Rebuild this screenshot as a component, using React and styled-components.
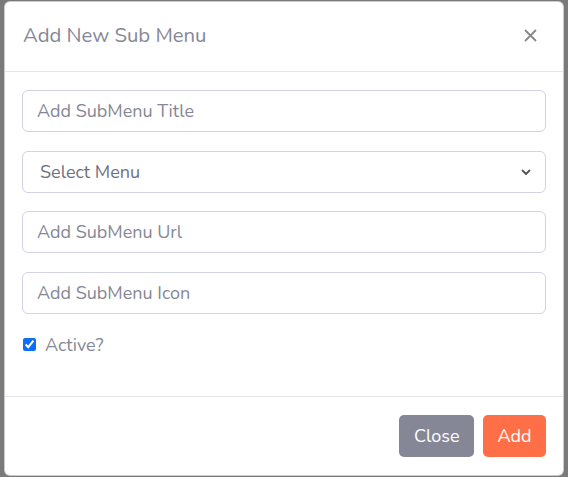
import React from "react";
import styled, { createGlobalStyle } from "styled-components";

const Global = createGlobalStyle`
  html, body { margin: 0; padding: 0; }
  body {
    background: #7a7a7a;
    font-family: "Nunito", "Noto Sans", "Open Sans", sans-serif;
    width: 568px;
    height: 477px;
    overflow: hidden;
  }
  * { box-sizing: border-box; }
`;

const Modal = styled.div`
  margin: 1px 0 0 4px;
  width: 560px;
  height: 475px;
  background: #fff;
  border: 1px solid rgba(0,0,0,0.2);
  border-radius: 6px;
  display: flex;
  flex-direction: column;
`;

const Header = styled.div`
  height: 70px;
  padding: 0 18px 2px 18px;
  display: flex;
  align-items: center;
  justify-content: space-between;
  border-bottom: 1px solid #e3e6f0;
`;

const Title = styled.h5`
  margin: 0;
  font-size: 20.3px;
  font-weight: 400;
  color: #858796;
  line-height: 1.5;
`;

const CloseX = styled.button`
  border: 0;
  background: transparent;
  padding: 0;
  width: 16px;
  height: 16px;
  display: flex;
  align-items: center;
  justify-content: center;
  margin-right: 7px;
  cursor: pointer;
`;

const Body = styled.div`
  padding: 18px 17px 0 17px;
  display: flex;
  flex-direction: column;
  gap: 18.7px;
  flex: 1;
`;

const Field = styled.input`
  height: 42px;
  width: 100%;
  border: 1px solid #d1d3e2;
  border-radius: 6px;
  padding: 0 14px;
  font-family: inherit;
  font-size: 18px;
  color: #6e707e;
  &::placeholder { color: #858796; }
`;

const SelectWrap = styled.div`
  position: relative;
  height: 42px;
`;

const Select = styled.select`
  appearance: none;
  height: 42px;
  width: 100%;
  border: 1px solid #d1d3e2;
  border-radius: 6px;
  padding: 0 17px;
  font-family: inherit;
  font-size: 18px;
  color: #6e707e;
  background: #fff;
`;

const Chevron = styled.svg`
  position: absolute;
  right: 15px;
  top: 17px;
  pointer-events: none;
`;

const CheckRow = styled.label`
  display: flex;
  align-items: center;
  gap: 9px;
  font-size: 18px;
  color: #858796;
`;

const Check = styled.input`
  margin: 0 0 0 1px;
  width: 13px;
  height: 13px;
  accent-color: #0d6efd;
`;

const Footer = styled.div`
  border-top: 1px solid #e3e6f0;
  height: 79px;
  display: flex;
  justify-content: flex-end;
  align-items: center;
  gap: 9px;
  padding: 0 17px;
`;

const Btn = styled.button`
  height: 42px;
  border: 0;
  border-radius: 5px;
  padding: 0 14.5px;
  font-family: inherit;
  font-size: 18px;
  color: #fff;
  background: ${p => p.$bg};
`;

export default function App() {
  return (
    <>
      <Global />
      <Modal>
        <Header>
          <Title>Add New Sub Menu</Title>
          <CloseX aria-label="Close">
            <svg width="13" height="13" viewBox="0 0 13 13">
              <path d="M1 1L12 12M12 1L1 12" stroke="#888" strokeWidth="1.8" />
            </svg>
          </CloseX>
        </Header>
        <Body>
          <Field placeholder="Add SubMenu Title" />
          <SelectWrap>
            <Select defaultValue="">
              <option value="">Select Menu</option>
            </Select>
            <Chevron width="10" height="8" viewBox="0 0 10 8">
              <path d="M1.5 2.5L5 6L8.5 2.5" stroke="#555" strokeWidth="1.8" fill="none" strokeLinecap="round" strokeLinejoin="round" />
            </Chevron>
          </SelectWrap>
          <Field placeholder="Add SubMenu Url" />
          <Field placeholder="Add SubMenu Icon" />
          <CheckRow>
            <Check type="checkbox" defaultChecked />
            Active?
          </CheckRow>
        </Body>
        <Footer>
          <Btn $bg="#858796">Close</Btn>
          <Btn $bg="#ff6f47">Add</Btn>
        </Footer>
      </Modal>
    </>
  );
}
